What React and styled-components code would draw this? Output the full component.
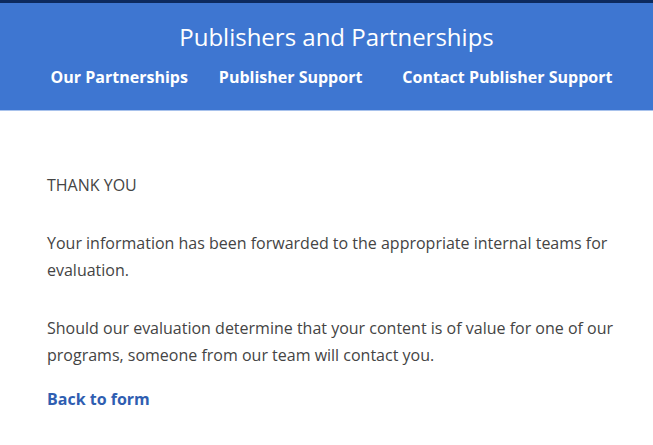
import React from "react";
import styled, { createGlobalStyle } from "styled-components";

const Global = createGlobalStyle`
  html, body { margin: 0; padding: 0; background: #fff; }
  body { font-family: "Open Sans", "Noto Sans", sans-serif; }
`;

const Header = styled.header`
  border-top: 3px solid #0d2a5e;
  background: #3e76d1;
  height: 107px;
  border-bottom: 1px solid #a8c2ec;
  box-sizing: content-box;
  display: flex;
  flex-direction: column;
  align-items: center;
  color: #fff;
`;

const Title = styled.h1`
  margin: 19px 0 0;
  padding-left: 20px;
  font-size: 24px;
  font-weight: 400;
  line-height: 30px;
`;

const Nav = styled.nav`
  display: flex;
  margin-top: 15px;
  padding-left: 10px;
`;

const NavLink = styled.a`
  color: #fff;
  text-decoration: none;
  font-weight: 700;
  font-size: 16px;
  line-height: 20px;
  margin-right: ${(p) => p.$gap}px;
`;

const Main = styled.main`
  padding: 61px 20px 0 47px;
  color: #444;
  font-size: 16px;
  line-height: 27px;
`;

const P = styled.p`
  margin: 0 0 31px;
  max-width: 572px;
`;

const Back = styled.a`
  display: block;
  width: fit-content;
  margin-top: -14px;
  color: #2f5eb1;
  font-weight: 700;
  text-decoration: none;
  font-size: 16px;
`;

export default function App() {
  return (
    <>
      <Global />
      <Header>
        <Title>Publishers and Partnerships</Title>
        <Nav>
          <NavLink href="#" $gap={31}>Our Partnerships</NavLink>
          <NavLink href="#" $gap={40}>Publisher Support</NavLink>
          <NavLink href="#" $gap={0}>Contact Publisher Support</NavLink>
        </Nav>
      </Header>
      <Main>
        <P>THANK YOU</P>
        <P>Your information has been forwarded to the appropriate internal teams for evaluation.</P>
        <P>Should our evaluation determine that your content is of value for one of our programs, someone from our team will contact you.</P>
        <Back href="#">Back to form</Back>
      </Main>
    </>
  );
}
